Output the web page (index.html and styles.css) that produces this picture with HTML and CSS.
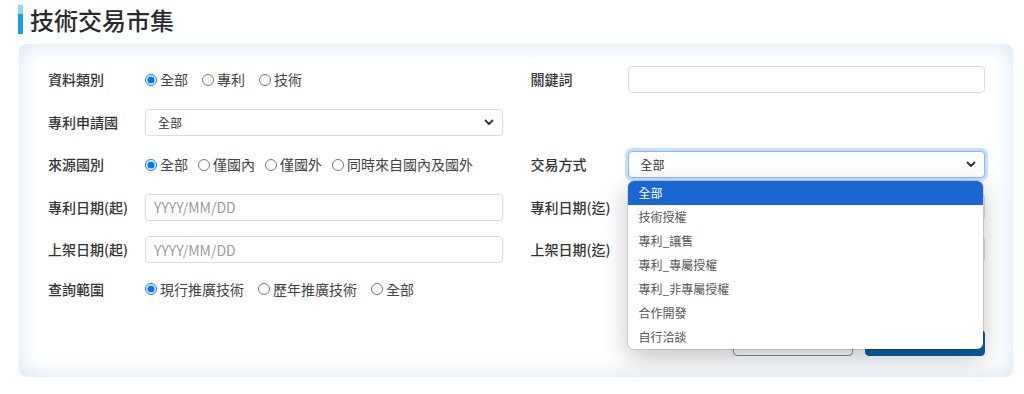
FILE: index.html
```html
<!DOCTYPE html>
<html lang="zh-Hant">
<head>
<meta charset="utf-8">
<title>技術交易市集</title>
<link rel="stylesheet" href="styles.css">
</head>
<body>
<h1 class="title">技術交易市集</h1>
<section class="panel">
  <div class="form">
    <div class="field">
      <span class="label">資料類別</span>
      <div class="radios">
        <label class="radio"><input type="radio" name="type" checked>全部</label>
        <label class="radio"><input type="radio" name="type">專利</label>
        <label class="radio"><input type="radio" name="type">技術</label>
      </div>
    </div>
    <div class="field">
      <span class="label">關鍵詞</span>
      <input class="input" type="text">
    </div>

    <div class="field">
      <span class="label">專利申請國</span>
      <div class="input select"><span>全部</span>
        <svg class="chev" width="10" height="7" viewBox="0 0 10 7"><path d="M1.5 1.5l3.5 3.5 3.5-3.5" fill="none" stroke="#333" stroke-width="1.8" stroke-linecap="round" stroke-linejoin="round"/></svg>
      </div>
    </div>
    <div class="field"></div>

    <div class="field">
      <span class="label">來源國別</span>
      <div class="radios tight">
        <label class="radio"><input type="radio" name="src" checked>全部</label>
        <label class="radio"><input type="radio" name="src">僅國內</label>
        <label class="radio"><input type="radio" name="src">僅國外</label>
        <label class="radio"><input type="radio" name="src">同時來自國內及國外</label>
      </div>
    </div>
    <div class="field">
      <span class="label">交易方式</span>
      <div class="input select focus"><span>全部</span>
        <svg class="chev" width="10" height="7" viewBox="0 0 10 7"><path d="M1.5 1.5l3.5 3.5 3.5-3.5" fill="none" stroke="#333" stroke-width="1.8" stroke-linecap="round" stroke-linejoin="round"/></svg>
        <ul class="menu">
          <li class="active">全部</li>
          <li>技術授權</li>
          <li>專利_讓售</li>
          <li>專利_專屬授權</li>
          <li>專利_非專屬授權</li>
          <li>合作開發</li>
          <li>自行洽談</li>
        </ul>
      </div>
    </div>

    <div class="field">
      <span class="label">專利日期(起)</span>
      <input class="input" type="text" placeholder="YYYY/MM/DD">
    </div>
    <div class="field">
      <span class="label">專利日期(迄)</span>
      <input class="input" type="text" placeholder="YYYY/MM/DD">
    </div>

    <div class="field">
      <span class="label">上架日期(起)</span>
      <input class="input" type="text" placeholder="YYYY/MM/DD">
    </div>
    <div class="field">
      <span class="label">上架日期(迄)</span>
      <input class="input" type="text" placeholder="YYYY/MM/DD">
    </div>

    <div class="field">
      <span class="label">查詢範圍</span>
      <div class="radios">
        <label class="radio"><input type="radio" name="scope" checked>現行推廣技術</label>
        <label class="radio"><input type="radio" name="scope">歷年推廣技術</label>
        <label class="radio"><input type="radio" name="scope">全部</label>
      </div>
    </div>
    <div class="field"></div>
  </div>
  <div class="actions">
    <button class="btn btn-outline" type="button" aria-label="清除條件"></button>
    <button class="btn btn-primary" type="button" aria-label="查詢"></button>
  </div>
</section>
</body>
</html>
```
FILE: styles.css
```css
html, body {
  margin: 0;
  padding: 0;
  background: #fff;
}
body {
  font-family: "Noto Sans CJK TC", "Noto Sans", sans-serif;
  color: #333;
}
.title {
  margin: 5px 0 0 18px;
  height: 29px;
  display: flex;
  align-items: center;
  gap: 7px;
  font-size: 24px;
  font-weight: 500;
  line-height: 29px;
  color: #2a2a2a;
}
.title::before {
  content: "";
  flex: none;
  width: 5px;
  height: 29px;
  background: linear-gradient(#8fd5ef 0 32%, #18a0d6 32%);
}
.panel {
  margin: 10px 11px 0 19px;
  padding: 22px 28px 21px 29px;
  border-radius: 8px;
  background: #fff;
  box-shadow: inset 0 0 22px #d3e4f3;
}
.form {
  display: grid;
  grid-template-columns: 1fr 1fr;
  column-gap: 28px;
  row-gap: 15.5px;
}
.field {
  display: flex;
  align-items: center;
}
.label {
  width: 97px;
  flex: none;
  font-size: 14px;
  font-weight: 500;
  line-height: 21px;
  color: #333;
}
.input {
  flex: 1;
  min-width: 0;
  height: 27px;
  box-sizing: border-box;
  margin: 0;
  border: 1px solid #dcdcdc;
  border-radius: 4px;
  padding: 0 8px;
  font-family: inherit;
  font-size: 14px;
  color: #333;
  background: #fff;
}
.input::placeholder {
  color: #9a9a9a;
}
.select {
  position: relative;
  display: flex;
  align-items: center;
  justify-content: space-between;
  padding: 0 8px 0 12px;
  font-size: 12px;
  line-height: 25px;
}
.select.focus {
  border-color: #86b7fe;
  box-shadow: 0 0 0 3px rgba(13, 110, 253, 0.22);
}
.chev {
  flex: none;
}
.radios {
  display: flex;
  align-items: center;
  gap: 14px;
  font-size: 14px;
  line-height: 21px;
  color: #444;
  white-space: nowrap;
}
.radios.tight {
  gap: 10px;
}
.radio {
  display: flex;
  align-items: center;
  gap: 3px;
}
.radio input {
  margin: 0;
  width: 12px;
  height: 12px;
}
.menu {
  position: absolute;
  left: -1px;
  right: 1px;
  top: calc(100% + 4px);
  margin: 0;
  padding: 0;
  list-style: none;
  background: #fff;
  border-radius: 6px;
  overflow: hidden;
  box-shadow: 0 8px 26px rgba(0, 0, 0, 0.25), 0 0 0 1px rgba(0, 0, 0, 0.1);
  z-index: 10;
}
.menu li {
  height: 24px;
  line-height: 24px;
  padding-left: 11px;
  font-size: 12px;
  color: #555;
}
.menu li.active {
  background: #1a66d2;
  color: #fff;
}
.actions {
  display: flex;
  justify-content: flex-end;
  gap: 12px;
  margin-top: 30.5px;
}
.btn {
  width: 120px;
  height: 26px;
  box-sizing: border-box;
  border-radius: 4px;
  font-family: inherit;
  font-size: 14px;
  cursor: pointer;
}
.btn-outline {
  background: #fff;
  border: 1px solid #5a93c2;
  color: #2a6fa8;
}
.btn-primary {
  background: #0a60a8;
  border: 1px solid #0a60a8;
  color: #fff;
}
```
